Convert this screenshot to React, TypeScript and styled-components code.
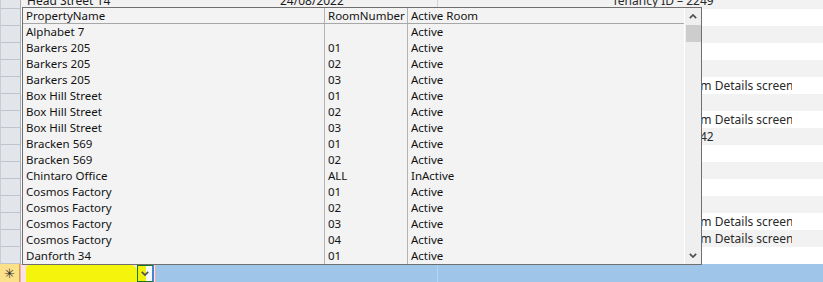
import React from "react";
import styled, { createGlobalStyle } from "styled-components";

const GlobalStyle = createGlobalStyle`
  html, body {
    margin: 0;
    padding: 0;
    background: #ffffff;
  }
  body {
    font-family: "Noto Sans", "Segoe UI", sans-serif;
    font-size: 12px;
    color: #1c1c1c;
  }
`;

type SheetRow = { name?: string; date?: string; note?: string; link?: boolean; indent?: number };

const sheetRows: SheetRow[] = [
  { name: "Head Street 14", date: "24/08/2022", note: "Tenancy ID – 2249" },
  { note: "Tenancy ID – 22", link: true, indent: 1 },
  {},
  {},
  {},
  { note: "Transfer to Room Details screen", indent: 2 },
  {},
  { note: "Transfer to Room Details screen", indent: 2 },
  { note: "Tenancy ID – 2242" },
  {},
  {},
  {},
  {},
  { note: "Transfer to Room Details screen", indent: 2 },
  { note: "Transfer to Room Details screen", indent: 2 },
  { note: "Tenancy ID – 22", link: true, indent: 1 },
];

type Room = { property: string; room: string; status: string };

const rooms: Room[] = [
  { property: "Alphabet 7", room: "", status: "Active" },
  { property: "Barkers 205", room: "01", status: "Active" },
  { property: "Barkers 205", room: "02", status: "Active" },
  { property: "Barkers 205", room: "03", status: "Active" },
  { property: "Box Hill Street", room: "01", status: "Active" },
  { property: "Box Hill Street", room: "02", status: "Active" },
  { property: "Box Hill Street", room: "03", status: "Active" },
  { property: "Bracken 569", room: "01", status: "Active" },
  { property: "Bracken 569", room: "02", status: "Active" },
  { property: "Chintaro Office", room: "ALL", status: "InActive" },
  { property: "Cosmos Factory", room: "01", status: "Active" },
  { property: "Cosmos Factory", room: "02", status: "Active" },
  { property: "Cosmos Factory", room: "03", status: "Active" },
  { property: "Cosmos Factory", room: "04", status: "Active" },
  { property: "Danforth 34", room: "01", status: "Active" },
];

const Chevron = ({ up }: { up?: boolean }) => (
  <svg width="8" height="5" viewBox="0 0 8 5">
    <polyline
      points={up ? "0.8,4.2 4,1 7.2,4.2" : "0.8,0.8 4,4 7.2,0.8"}
      fill="none"
      stroke="#505050"
      strokeWidth="1.7"
    />
  </svg>
);

const App = () => {
  return (
    <Page>
      <GlobalStyle />
      <Sheet>
        {sheetRows.map((r, i) => (
          <Row key={i} $alt={i % 2 === 0}>
            <Selector />
            <Cell $pad={6}>{r.name}</Cell>
            <Cell $pad={7}>{r.date}</Cell>
            <Cell $line $pad={4} />
            <NoteCell $link={r.link} $indent={r.indent ?? 0}>
              {r.note}
            </NoteCell>
            <Cell $pad={4} />
          </Row>
        ))}
        <NewRow>
          <NewSelector>✳</NewSelector>
          <EditCell>
            <Field />
            <DropButton>
              <Chevron />
            </DropButton>
          </EditCell>
          <BlueCell />
          <BlueCell $line />
        </NewRow>
      </Sheet>

      <Dropdown>
        <List>
          <ListHeader>
            <ListCell $line>PropertyName</ListCell>
            <ListCell $line>RoomNumber</ListCell>
            <ListCell>Active Room</ListCell>
          </ListHeader>
          {rooms.map((r, i) => (
            <ListRow key={i}>
              <ListCell $line>{r.property}</ListCell>
              <ListCell $line>{r.room}</ListCell>
              <ListCell>{r.status}</ListCell>
            </ListRow>
          ))}
        </List>
        <ScrollBar>
          <ScrollButton>
            <Chevron up />
          </ScrollButton>
          <Thumb />
          <Track />
          <ScrollButton>
            <Chevron />
          </ScrollButton>
        </ScrollBar>
      </Dropdown>
    </Page>
  );
};

export default App;

const Page = styled.div`
  position: relative;
  width: 823px;
  height: 282px;
  overflow: hidden;
  background: #ffffff;
`;

const Sheet = styled.div`
  display: flex;
  flex-direction: column;
  margin-top: -8px;
`;

const Row = styled.div<{ $alt: boolean }>`
  display: grid;
  grid-template-columns: 21px 252px 164px 171px 184px 1fr;
  height: 17px;
  line-height: 17px;
  background: ${(p) => (p.$alt ? "#f2f2f2" : "#ffffff")};
  white-space: nowrap;
`;

const Selector = styled.div`
  box-sizing: border-box;
  background: #e2e5ea;
  border-left: 1px solid #c9ccd2;
  border-right: 1px solid #a9aeb6;
  border-bottom: 1px solid #c0c4ca;
`;

const Cell = styled.div<{ $pad: number; $line?: boolean }>`
  padding-left: ${(p) => p.$pad}px;
  overflow: hidden;
  border-left: ${(p) => (p.$line ? "1px solid #d4d4d4" : "none")};
`;

const NoteCell = styled.div<{ $link?: boolean; $indent: number }>`
  padding-left: ${(p) => 4 + p.$indent}px;
  overflow: hidden;
  color: ${(p) => (p.$link ? "#0b5ed1" : "#2a2a2a")};
`;

const NewRow = styled.div`
  display: grid;
  grid-template-columns: 20px 136px 281px 1fr;
  height: 18px;
`;

const NewSelector = styled.div`
  background: #fde08a;
  border-right: 1px solid #c9a44a;
  color: #333333;
  font-size: 13px;
  line-height: 18px;
  text-align: center;
`;

const EditCell = styled.div`
  display: flex;
  box-sizing: border-box;
  border: 1px solid #f4aeb0;
  border-bottom: none;
  padding: 0 1px 0 5px;
  background: #fbe2e2;
`;

const Field = styled.div`
  flex: 1;
  background: #f4f40c;
  border-radius: 4px 6px 0 0;
`;

const DropButton = styled.div`
  width: 17px;
  box-sizing: border-box;
  display: flex;
  align-items: center;
  justify-content: center;
  border: 1px solid #16751f;
  border-right: 2px solid #3d86d6;
  background: linear-gradient(90deg, #eef20e 0 55%, #f6f9fd 55% 100%);
`;

const BlueCell = styled.div<{ $line?: boolean }>`
  background: #9fc6e8;
  border-left: ${(p) => (p.$line ? "1px solid #b9d5ee" : "none")};
`;

const Dropdown = styled.div`
  position: absolute;
  left: 22px;
  top: 7px;
  width: 680px;
  height: 258px;
  box-sizing: border-box;
  display: flex;
  border: 1px solid #6f6f6f;
  background: #f3f3f3;
  overflow: hidden;
  font-size: 11.5px;
  color: #121212;
`;

const List = styled.div`
  flex: 1;
  display: flex;
  flex-direction: column;
`;

const ListHeader = styled.div`
  display: grid;
  grid-template-columns: 302px 83px 1fr;
  height: 16px;
  box-sizing: border-box;
  border-bottom: 1px solid #a7a7a7;
  line-height: 15px;
`;

const ListRow = styled.div`
  display: grid;
  grid-template-columns: 302px 83px 1fr;
  height: 16px;
  flex-shrink: 0;
  line-height: 16px;
`;

const ListCell = styled.div<{ $line?: boolean }>`
  padding-left: 3px;
  white-space: nowrap;
  overflow: hidden;
  border-right: ${(p) => (p.$line ? "1px solid #b3b3b3" : "none")};
`;

const ScrollBar = styled.div`
  width: 17px;
  display: flex;
  flex-direction: column;
  box-sizing: border-box;
  border-left: 1px solid #ffffff;
  background: #efefef;
`;

const ScrollButton = styled.div`
  height: 17px;
  display: flex;
  align-items: center;
  justify-content: center;
`;

const Thumb = styled.div`
  height: 17px;
  margin-left: 1px;
  background: #cdcdcd;
`;

const Track = styled.div`
  flex: 1;
`;
